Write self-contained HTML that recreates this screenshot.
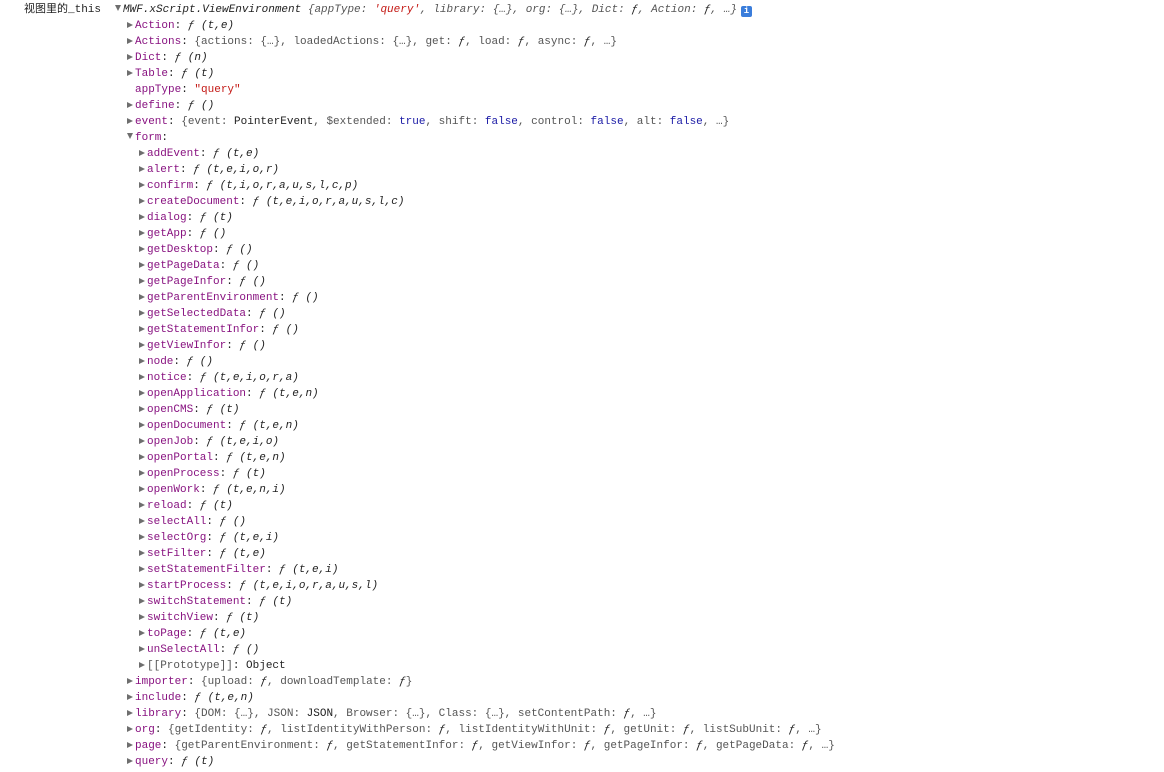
<!DOCTYPE html>
<html><head><meta charset="utf-8"><style>
body{margin:0;background:#fff;width:1164px;height:772px;overflow:hidden;font-family:"Liberation Mono",monospace;font-size:11px;color:#222}
.r{position:absolute;height:16px;line-height:16px;white-space:pre}
.k{color:#881280}.f{font-style:italic;color:#222}.s{color:#c41a16}.g{color:#555}.b{color:#1a1aa6}
.t{display:inline-block;width:0;height:0;border-top:3.5px solid transparent;border-bottom:3.5px solid transparent;border-left:6px solid #6e6e6e;margin-right:2px;vertical-align:0px}
.d{display:inline-block;width:0;height:0;border-left:3.5px solid transparent;border-right:3.5px solid transparent;border-top:6px solid #6e6e6e;margin-right:2px;vertical-align:1px}
.i{display:inline-block;width:11px;height:11px;background:#3a7ddb;color:#fff;font-size:9px;line-height:11px;text-align:center;border-radius:2px;font-weight:bold;font-style:normal;vertical-align:-1px;margin-left:4px}
</style></head><body>
<div class="r" style="left:24px;top:2px;font-family:'Liberation Mono','Noto Sans CJK SC',monospace">视图里的_this</div>
<div class="r" style="left:115px;top:2px"><span class="d"></span><span class="f">MWF.xScript.ViewEnvironment <span class="g">{appType: </span><span class="s">'query'</span><span class="g">, library: {…}, org: {…}, Dict: </span>ƒ<span class="g">, Action: </span>ƒ<span class="g">, …}</span></span><span class="i">i</span></div>
<div id="c"></div>
<script>
var L=[
[0,'t','Action','<span class="f">ƒ (t,e)</span>'],
[0,'t','Actions','<span class="g">{actions: {…}, loadedActions: {…}, get: </span><span class="f">ƒ</span><span class="g">, load: </span><span class="f">ƒ</span><span class="g">, async: </span><span class="f">ƒ</span><span class="g">, …}</span>'],
[0,'t','Dict','<span class="f">ƒ (n)</span>'],
[0,'t','Table','<span class="f">ƒ (t)</span>'],
[0,'','appType','<span class="s">"query"</span>'],
[0,'t','define','<span class="f">ƒ ()</span>'],
[0,'t','event','<span class="g">{event: </span>PointerEvent<span class="g">, $extended: </span><span class="b">true</span><span class="g">, shift: </span><span class="b">false</span><span class="g">, control: </span><span class="b">false</span><span class="g">, alt: </span><span class="b">false</span><span class="g">, …}</span>'],
[0,'d','form',''],
[1,'t','addEvent','<span class="f">ƒ (t,e)</span>'],
[1,'t','alert','<span class="f">ƒ (t,e,i,o,r)</span>'],
[1,'t','confirm','<span class="f">ƒ (t,i,o,r,a,u,s,l,c,p)</span>'],
[1,'t','createDocument','<span class="f">ƒ (t,e,i,o,r,a,u,s,l,c)</span>'],
[1,'t','dialog','<span class="f">ƒ (t)</span>'],
[1,'t','getApp','<span class="f">ƒ ()</span>'],
[1,'t','getDesktop','<span class="f">ƒ ()</span>'],
[1,'t','getPageData','<span class="f">ƒ ()</span>'],
[1,'t','getPageInfor','<span class="f">ƒ ()</span>'],
[1,'t','getParentEnvironment','<span class="f">ƒ ()</span>'],
[1,'t','getSelectedData','<span class="f">ƒ ()</span>'],
[1,'t','getStatementInfor','<span class="f">ƒ ()</span>'],
[1,'t','getViewInfor','<span class="f">ƒ ()</span>'],
[1,'t','node','<span class="f">ƒ ()</span>'],
[1,'t','notice','<span class="f">ƒ (t,e,i,o,r,a)</span>'],
[1,'t','openApplication','<span class="f">ƒ (t,e,n)</span>'],
[1,'t','openCMS','<span class="f">ƒ (t)</span>'],
[1,'t','openDocument','<span class="f">ƒ (t,e,n)</span>'],
[1,'t','openJob','<span class="f">ƒ (t,e,i,o)</span>'],
[1,'t','openPortal','<span class="f">ƒ (t,e,n)</span>'],
[1,'t','openProcess','<span class="f">ƒ (t)</span>'],
[1,'t','openWork','<span class="f">ƒ (t,e,n,i)</span>'],
[1,'t','reload','<span class="f">ƒ (t)</span>'],
[1,'t','selectAll','<span class="f">ƒ ()</span>'],
[1,'t','selectOrg','<span class="f">ƒ (t,e,i)</span>'],
[1,'t','setFilter','<span class="f">ƒ (t,e)</span>'],
[1,'t','setStatementFilter','<span class="f">ƒ (t,e,i)</span>'],
[1,'t','startProcess','<span class="f">ƒ (t,e,i,o,r,a,u,s,l)</span>'],
[1,'t','switchStatement','<span class="f">ƒ (t)</span>'],
[1,'t','switchView','<span class="f">ƒ (t)</span>'],
[1,'t','toPage','<span class="f">ƒ (t,e)</span>'],
[1,'t','unSelectAll','<span class="f">ƒ ()</span>'],
[1,'t','P','Object'],
[0,'t','importer','<span class="g">{upload: </span><span class="f">ƒ</span><span class="g">, downloadTemplate: </span><span class="f">ƒ</span><span class="g">}</span>'],
[0,'t','include','<span class="f">ƒ (t,e,n)</span>'],
[0,'t','library','<span class="g">{DOM: {…}, JSON: </span>JSON<span class="g">, Browser: {…}, Class: {…}, setContentPath: </span><span class="f">ƒ</span><span class="g">, …}</span>'],
[0,'t','org','<span class="g">{getIdentity: </span><span class="f">ƒ</span><span class="g">, listIdentityWithPerson: </span><span class="f">ƒ</span><span class="g">, listIdentityWithUnit: </span><span class="f">ƒ</span><span class="g">, getUnit: </span><span class="f">ƒ</span><span class="g">, listSubUnit: </span><span class="f">ƒ</span><span class="g">, …}</span>'],
[0,'t','page','<span class="g">{getParentEnvironment: </span><span class="f">ƒ</span><span class="g">, getStatementInfor: </span><span class="f">ƒ</span><span class="g">, getViewInfor: </span><span class="f">ƒ</span><span class="g">, getPageInfor: </span><span class="f">ƒ</span><span class="g">, getPageData: </span><span class="f">ƒ</span><span class="g">, …}</span>'],
[0,'t','query','<span class="f">ƒ (t)</span>']
];
var h='';
L.forEach(function(l,i){
 var x=l[1]?(l[0]?139:127):135;
 var tri=l[1]?'<span class="'+l[1]+'"></span>':'';
 var key=l[2]=='P'?'<span class="g">[[Prototype]]</span>: ':'<span class="k">'+l[2]+'</span>: ';
 h+='<div class="r" style="left:'+x+'px;top:'+(18+i*16)+'px">'+tri+key+l[3]+'</div>';
});
document.getElementById('c').innerHTML=h;
</script>
</body></html>
